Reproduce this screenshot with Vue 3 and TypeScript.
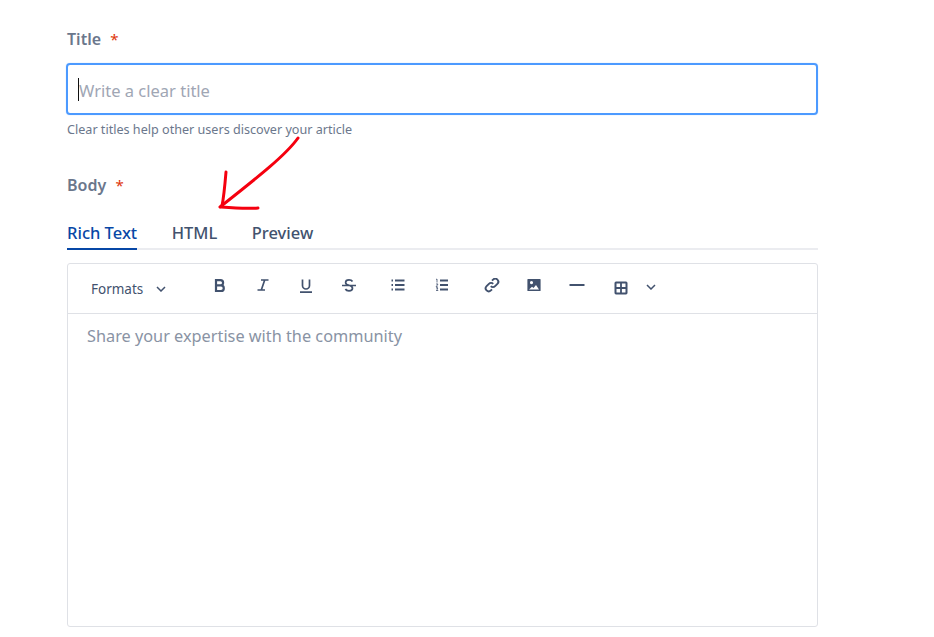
<script setup lang="ts">
const tabs = ['Rich Text', 'HTML', 'Preview']
</script>

<template>
  <main class="page">
    <label class="label title-label">Title <span class="req">*</span></label>
    <div class="input"><i class="caret"></i><span>Write a clear title</span></div>
    <p class="help">Clear titles help other users discover your article</p>
    <label class="label body-label">Body <span class="req">*</span></label>
    <nav class="tabs">
      <a v-for="(t, i) in tabs" :key="t" class="tab" :class="{ active: i === 0 }">{{ t }}</a>
    </nav>
    <section class="editor">
      <div class="toolbar">
        <span class="formats">Formats
          <svg class="chev" width="10" height="6" viewBox="0 0 10 6"><path d="M1 1l4 4 4-4" /></svg>
        </span>
        <div class="group g-text">
          <svg class="ic" viewBox="0 0 16 16"><path class="fat" d="M4 2.200h4.500a2.500 2.500 0 0 1 0 5.200H4zM4 7.400h5a2.800 2.800 0 0 1 0 5.600H4z" /></svg>
          <svg class="ic" viewBox="0 0 16 16"><path class="st" d="M6 2h7.500M2.500 12h7.500M9.700 2L6.300 12" /></svg>
          <svg class="ic" viewBox="0 0 16 16"><path class="st" d="M4.500 1.500v6a3.500 3.500 0 0 0 7 0v-6M2 14.200h12" /></svg>
          <svg class="ic" viewBox="0 0 16 16"><path class="st" d="M1 7.500h14M11.500 3.500C10.800 2.300 9.500 1.800 8 1.800c-2 0-3.400 1-3.400 2.600C4.600 6.300 6.500 6.900 8 7.300c2 .5 3.500 1.200 3.500 3 0 1.600-1.500 2.500-3.500 2.500-1.600 0-3-.6-3.600-1.800" /></svg>
        </div>
        <div class="group g-list">
          <svg class="ic" viewBox="0 1 16 16"><path class="ln" d="M5 3.500h9.500M5 8h9.500M5 12.500h9.500M1.500 3.500H3M1.500 8H3M1.500 12.500H3" /></svg>
          <svg class="ic" viewBox="0 1 16 16"><path class="ln" d="M6 3.500h8M6 8h8M6 12.500h8" /><path class="thin" d="M2 2.500l1-.5v3.500M2 7h2L2 10h2M2 11h2l-1 1.200 1 1.300H2" /></svg>
        </div>
        <div class="group g-insert">
          <svg class="ic link" viewBox="0 1 16 16"><path class="lnk" d="M6.800 9.200a3 3 0 0 0 4.300 0l2.300-2.300a3 3 0 0 0-4.300-4.300L8 3.700M9.200 6.800a3 3 0 0 0-4.300 0L2.600 9.100a3 3 0 0 0 4.300 4.300L8 12.300" /></svg>
          <svg class="ic" viewBox="0 0 16 16"><path class="solid" fill-rule="evenodd" d="M2 1h12a.6.6 0 0 1 .6.6v10.800a.6.6 0 0 1-.6.6H2a.6.6 0 0 1-.6-.6V1.600A.6.6 0 0 1 2 1zM5.500 3a1.600 1.600 0 1 0 0 3.200 1.600 1.600 0 0 0 0-3.200zM3 11.500h10L10 7l-2.500 3-1.500-1.300z" /></svg>
          <svg class="ic" viewBox="0 0 16 16"><path class="hr" d="M.5 7h15" /></svg>
          <svg class="ic tbl" viewBox="0 0 16 16"><path class="solid" fill-rule="evenodd" d="M3 1.500h10A1.600 1.600 0 0 1 14.500 3v10a1.600 1.600 0 0 1-1.500 1.500H3A1.600 1.600 0 0 1 1.500 13V3A1.600 1.600 0 0 1 3 1.500zM3.500 3.500v3.600h3.600V3.500zM8.900 3.500v3.600h3.600V3.500zM3.500 8.900v3.600h3.600V8.900zM8.900 8.900v3.600h3.600V8.900z" /></svg>
          <svg class="chev tbl-chev" width="10" height="6" viewBox="0 0 10 6"><path d="M1 1l4 4 4-4" /></svg>
        </div>
      </div>
      <div class="content">Share your expertise with the community</div>
    </section>
    <svg class="arrow" width="90" height="75" viewBox="0 0 90 75">
      <path d="M78 2C66 19 38 41 0 71" />
      <path d="M6 36C5 48 4 60 2 70M1 71c12 1 25 2 37 1" />
    </svg>
  </main>
</template>

<style>
html, body { margin: 0; background: #fff; }
</style>

<style scoped>
.page {
  position: relative;
  box-sizing: border-box;
  width: 934px;
  height: 637px;
  overflow: hidden;
  padding: 28px 116px 0 67px;
  font-family: "Noto Sans", "Open Sans", sans-serif;
  color: #42526e;
}
.label { display: block; font-size: 16px; font-weight: 600; line-height: 22px; color: #6b778c; }
.req { color: #de350b; font-weight: 400; margin-left: 5px; font-size: 15px; }
.input {
  box-sizing: border-box;
  display: flex;
  align-items: center;
  position: relative;
  height: 52px;
  margin: 13px 0 0 -1px;
  padding: 2px 0 0 11px;
  border: 2px solid #4c9aff;
  border-radius: 4px;
  box-shadow: 0 0 1px rgba(76, 154, 255, 0.6);
  font-size: 16.5px;
  color: #a0a6b4;
}
.caret { position: absolute; left: 10px; top: 13px; width: 1px; height: 23px; background: #111; }
.help { margin: 6px 0 0; font-size: 12.6px; line-height: 17px; color: #6b778c; }
.body-label { margin-top: 36px; }
.tabs { display: flex; gap: 34.5px; margin-top: 23px; border-bottom: 2px solid #ebecf0; height: 31px; box-sizing: border-box; }
.tab { font-size: 16.5px; font-weight: 500; line-height: 22px; height: 31px; box-sizing: border-box; color: #42526e; padding-top: 3px; }
.tab.active { color: #0747a6; border-bottom: 2px solid #0747a6; }
.editor { box-sizing: border-box; height: 364px; margin-top: 13px; border: 1px solid #dfe1e6; border-radius: 3px; }
.toolbar { display: flex; align-items: center; height: 49px; border-bottom: 1px solid #dfe1e6; padding-left: 23px; }
.formats { display: inline-flex; align-items: center; gap: 13px; font-size: 13.5px; color: #42526e; width: 120.5px; flex: none; }
.group { display: flex; align-items: flex-start; height: 16px; margin-bottom: 5px; }
.g-text { gap: 27px; }
.g-list { gap: 27.5px; margin-left: 33.5px; }
.g-insert { margin-left: 33.5px; gap: 27px; }
.ic { width: 16px; height: 16px; display: block; }
.ic path { stroke: #42526e; fill: none; }
.ic .st { stroke-width: 1.7; }
.ic .ln { stroke-width: 2; }
.ic .hr { stroke-width: 2; }
.ic .thin { stroke-width: .8; }
.ic .fat { stroke-width: 2.2; }
.ic .lnk { stroke-width: 1.9; }
.ic .solid { fill: #42526e; stroke: none; }
.chev path { stroke: #42526e; fill: none; stroke-width: 1.5; }
.link { margin-left: 1px; margin-right: -1px; }
.tbl { margin: 2px 0 0 1px; }
.tbl-chev { margin: 6px 0 0 -10.5px; }
.content { padding: 10px 19px; font-size: 16.3px; line-height: 24px; color: #8993a4; }
.arrow { position: absolute; left: 220px; top: 136px; pointer-events: none; overflow: visible; }
.arrow path { fill: none; stroke: #f5000f; stroke-width: 3; stroke-linecap: round; stroke-linejoin: round; }
</style>
